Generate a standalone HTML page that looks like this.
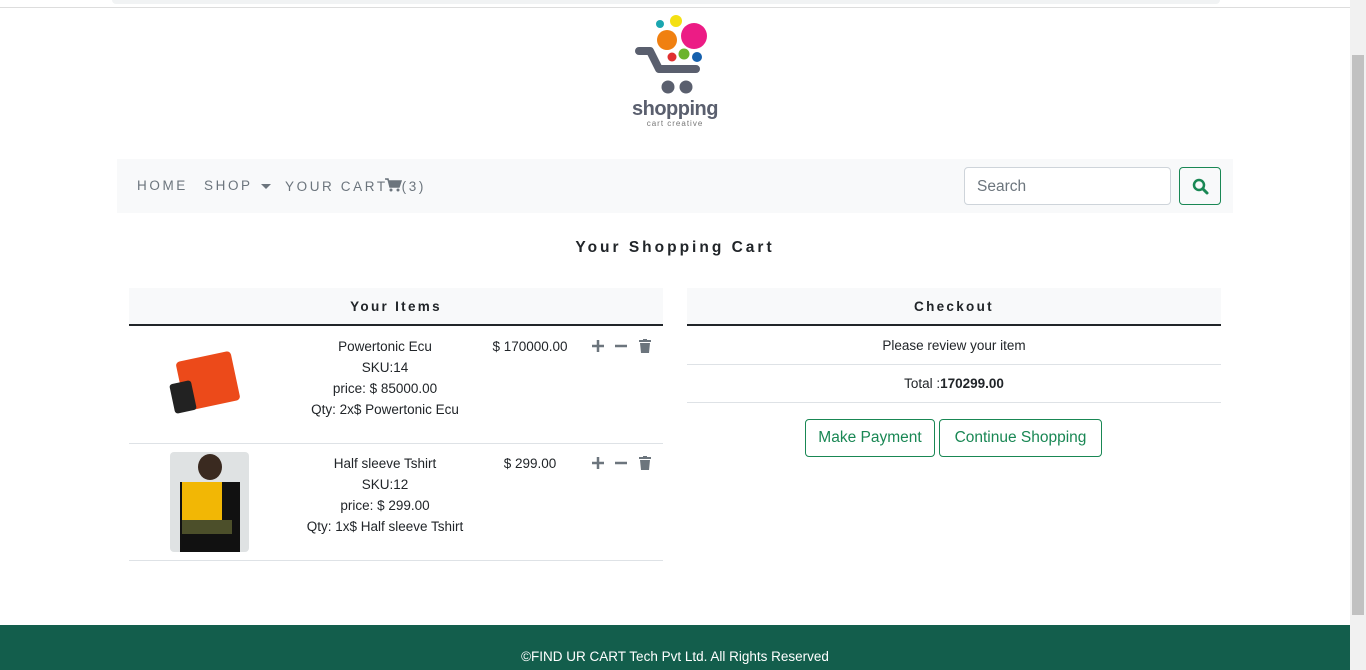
<!DOCTYPE html>
<html><head><style>
*{box-sizing:border-box;margin:0;padding:0}
body{width:1366px;height:670px;overflow:hidden;font-family:"Liberation Sans",sans-serif;color:#212529;background:#fff;position:relative;font-size:13.5px}
.abs{position:absolute}
.sb{right:0;top:0;width:16px;height:670px;background:#f1f1f1}
.sb div{position:absolute;left:2px;right:2px;top:55px;height:560px;background:#c1c1c1}
.top{left:0;top:0;width:1350px;height:8px;background:#fff;border-bottom:1px solid #ddd}
.top div{position:absolute;left:112px;width:1108px;top:0;height:4px;background:#f1f3f4;border-radius:0 0 6px 6px}
.nav{left:117px;top:159px;width:1116px;height:54px;background:#f8f9fa}
.nav span{position:absolute;top:19px;font-size:13.5px;letter-spacing:2.6px;color:#6c757d}
.search{left:964px;top:167px;width:207px;height:38px;border:1px solid #ced4da;border-radius:4px;background:#fff;color:#6c757d;font-size:15.5px;padding:0 12px;line-height:38px}
.sbtn{left:1179px;top:167px;width:42px;height:38px;border:1px solid #198754;border-radius:4px}
h1{position:absolute;left:0;width:1350px;top:238px;text-align:center;font-size:15.5px;letter-spacing:3px;font-weight:bold;color:#212529;line-height:20px}
.th{height:38px;background:#f8f9fa;border-bottom:2px solid #212529;text-align:center;font-weight:bold;letter-spacing:2.3px;font-size:13.5px;line-height:38px}
.row{border-bottom:1px solid #dee2e6}
.c{position:absolute;text-align:center;font-size:13.5px;line-height:21px}
.btn{top:419px;height:38px;border:1px solid #198754;border-radius:4px;color:#198754;font-size:15.5px;line-height:36px;text-align:center}
.foot{left:0;top:625px;width:1350px;height:45px;background:#135e4c;color:#fff;text-align:center;font-size:13.5px;padding-top:24px}
</style></head><body>
<div class="abs top"><div></div></div>
<div class="abs sb"><div></div></div>
<svg class="abs" style="left:630px;top:12px" width="92" height="120" viewBox="0 0 92 120">
<circle cx="30" cy="12" r="4" fill="#1aa6b0"/><circle cx="46" cy="9" r="6" fill="#f4e012"/>
<circle cx="64" cy="24" r="13" fill="#ec1c85"/><circle cx="37" cy="28" r="10" fill="#f08010"/>
<circle cx="42" cy="45" r="4.5" fill="#e03030"/><circle cx="54" cy="42" r="5.5" fill="#6cb42c"/><circle cx="67" cy="45" r="5" fill="#1560ad"/>
<path d="M9 39 L20 39 L29 57 L66 57" stroke="#5a5f6e" stroke-width="8" fill="none" stroke-linecap="round" stroke-linejoin="round"/>
<circle cx="38" cy="75" r="6.5" fill="#5a5f6e"/><circle cx="56" cy="75" r="6.5" fill="#5a5f6e"/>
<text x="45" y="103" text-anchor="middle" font-family="Liberation Sans" font-weight="bold" font-size="20" fill="#5a5f6e" letter-spacing="-0.5">shopping</text>
<text x="45" y="114" text-anchor="middle" font-family="Liberation Sans" font-size="8" fill="#777" letter-spacing="1">cart creative</text>
</svg>
<div class="abs nav">
<span style="left:20px">HOME</span><span style="left:87px">SHOP</span>
<span style="left:144px;top:25px;width:0;height:0;border-left:5px solid transparent;border-right:5px solid transparent;border-top:5px solid #6c757d;letter-spacing:0"></span>
<span style="left:168px">YOUR CART<svg width="17" height="14" viewBox="0 0 17 14" style="vertical-align:-1px;margin-left:-3px"><path d="M0 1h3l2 8h9l2-6H4" fill="#6c757d" stroke="#6c757d" stroke-width="1.5"/><circle cx="6" cy="12" r="1.5" fill="#6c757d"/><circle cx="13" cy="12" r="1.5" fill="#6c757d"/></svg>(3)</span>
</div>
<div class="abs search">Search</div>
<div class="abs sbtn"><svg width="40" height="36" viewBox="0 0 40 36"><circle cx="19" cy="17" r="5" stroke="#198754" stroke-width="2.5" fill="none"/><path d="M23 21l4 4" stroke="#198754" stroke-width="3" stroke-linecap="round"/></svg></div>
<h1>Your Shopping Cart</h1>
<div class="abs" style="left:129px;top:288px;width:534px">
<div class="th">Your Items</div>
<div class="row" style="height:118px"></div>
<div class="row" style="height:117px"></div>
</div>
<div class="abs" style="left:168px;top:342px;width:82px;height:85px">
<div class="abs" style="left:12px;top:14px;width:56px;height:50px;background:#ec4a1a;border-radius:4px;transform:rotate(-12deg)"></div>
<div class="abs" style="left:4px;top:40px;width:22px;height:30px;background:#222;border-radius:3px;transform:rotate(-12deg)"></div>
</div>
<div class="abs" style="left:170px;top:452px;width:79px;height:100px;background:#dfe2e3;border-radius:4px;overflow:hidden">
<div class="abs" style="left:28px;top:2px;width:24px;height:26px;background:#3a2a20;border-radius:50%"></div>
<div class="abs" style="left:10px;top:30px;width:60px;height:70px;background:#111"></div>
<div class="abs" style="left:12px;top:30px;width:40px;height:38px;background:#f2b705"></div>
<div class="abs" style="left:12px;top:68px;width:50px;height:14px;background:#4c4f2a"></div>
</div>
<div class="c" style="left:290px;width:190px;top:336px">Powertonic Ecu<br>SKU:14<br>price: $ 85000.00<br>Qty: 2x$ Powertonic Ecu</div>
<div class="c" style="left:290px;width:190px;top:453px">Half sleeve Tshirt<br>SKU:12<br>price: $ 299.00<br>Qty: 1x$ Half sleeve Tshirt</div>
<div class="c" style="left:480px;width:100px;top:336px">$ 170000.00</div>
<div class="c" style="left:480px;width:100px;top:453px">$ 299.00</div>
<svg class="abs" style="left:590px;top:338px" width="64" height="16"><path d="M2 8h12M8 2v12M25 8h12" stroke="#6c757d" stroke-width="2.5"/><path d="M49 3h12M53 2h4" stroke="#6c757d" stroke-width="2"/><path d="M50 5h10l-1 10h-8z" fill="#6c757d"/></svg>
<svg class="abs" style="left:590px;top:455px" width="64" height="16"><path d="M2 8h12M8 2v12M25 8h12" stroke="#6c757d" stroke-width="2.5"/><path d="M49 3h12M53 2h4" stroke="#6c757d" stroke-width="2"/><path d="M50 5h10l-1 10h-8z" fill="#6c757d"/></svg>
<div class="abs" style="left:687px;top:288px;width:534px">
<div class="th">Checkout</div>
<div class="row" style="height:39px;text-align:center;line-height:39px">Please review your item</div>
<div class="row" style="height:38px;text-align:center;line-height:38px">Total :<b>170299.00</b></div>
</div>
<div class="abs btn" style="left:805px;width:130px">Make Payment</div>
<div class="abs btn" style="left:939px;width:163px">Continue Shopping</div>
<div class="abs foot">©FIND UR CART Tech Pvt Ltd. All Rights Reserved</div>
</body></html>
